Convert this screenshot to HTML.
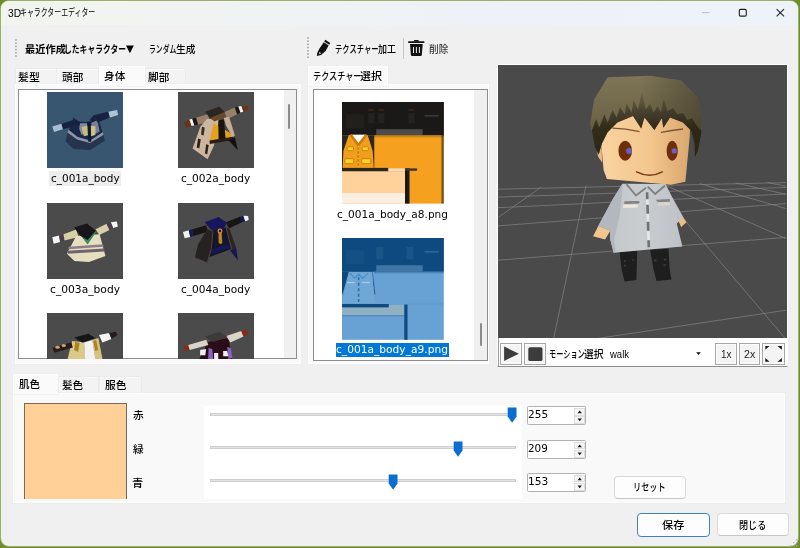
<!DOCTYPE html>
<html lang="ja"><head><meta charset="utf-8"><title>3Dキャラクターエディター</title>
<style>html,body{margin:0;padding:0}
body{width:800px;height:548px;overflow:hidden;background:#6f8c2e;position:relative;font-family:"Liberation Sans","Noto Sans CJK JP",sans-serif}
div,span,svg{position:absolute;box-sizing:border-box}
.t{font-weight:500;white-space:nowrap;line-height:16px;height:16px;transform-origin:0 50%;display:block}
.j{font-family:"Liberation Sans","Noto Sans CJK JP",sans-serif}
.v{font-family:"DejaVu Sans","Liberation Sans",sans-serif}
.btn{background:#fdfdfd;border:1px solid #d9d9d9;border-bottom-color:#c6c6c6;border-radius:4px}
.sbtn{background:#f4f4f4;border:1px solid #a6a6a6;box-shadow:inset 0 0 0 1px #fbfbfb}
.spin{background:#fff;border:1px solid #b2b2b2;border-radius:1.5px}
.tab{background:#f3f3f3;border:1px solid #ebebeb;border-bottom:none;box-shadow:inset 1px 1px 0 #f8f8f8}
.tabsel{background:#fafafa;border:1px solid #fdfdfd;border-bottom:none;box-shadow:0 0 0 .5px #ebebeb}
</style></head>
<body>
<svg width="0" height="0" style="left:0;top:0"><defs><filter id="sb" x="-10%" y="-10%" width="120%" height="120%"><feGaussianBlur stdDeviation="0.45"/></filter></defs></svg>
<div id="window" style="left:1px;top:1px;width:797px;height:545px;border-radius:8px;background:#f0f0f0;overflow:hidden;box-shadow:0 0 0 1px rgba(190,205,150,.55)"><div id="titlebar" style="left:0;top:0;width:797px;height:24px;background:linear-gradient(90deg,#f2f5ee 0%,#f0f3f3 30%,#eef2f8 60%,#eef2f9 100%)"></div></div>
<span class="t j" style="left:7.51px;top:4.60px;font-size:10.5px;font-weight:400;transform:scaleX(0.9760);">3D</span>
<span class="t j" style="left:19.91px;top:4.60px;font-size:10px;font-weight:400;transform:scaleX(0.6907);">キャラクターエディター</span>
<svg style="left:690px;top:0px" width="110" height="26" viewBox="0 0 110 26" ><path d="M12.1 12.65H19.5" stroke="#bcc0c4" stroke-width="1" fill="none"/><rect x="49.3" y="9.4" width="7" height="6.7" rx="1.4" fill="none" stroke="#1e1e1e" stroke-width="1.1"/><path d="M86.6 9.1L94 16.4M94 9.1L86.6 16.4" stroke="#1e1e1e" stroke-width="1.05" fill="none"/></svg>
<svg style="left:14.9px;top:39.0px" width="2" height="21" viewBox="0 0 2 21" ><rect x="0.2" y="0.20" width="1.5" height="1.5" fill="#9c9c9c"/><rect x="0.2" y="3.42" width="1.5" height="1.5" fill="#9c9c9c"/><rect x="0.2" y="6.64" width="1.5" height="1.5" fill="#9c9c9c"/><rect x="0.2" y="9.86" width="1.5" height="1.5" fill="#9c9c9c"/><rect x="0.2" y="13.08" width="1.5" height="1.5" fill="#9c9c9c"/><rect x="0.2" y="16.30" width="1.5" height="1.5" fill="#9c9c9c"/></svg>
<span class="t j" style="left:25.01px;top:40.80px;font-size:10.5px;font-weight:700;transform:scaleX(0.9758);">最近作成</span>
<span class="t j" style="left:64.08px;top:40.80px;font-size:10.5px;font-weight:700;transform:scaleX(0.7422);">したキャラクター</span>
<span class="t v" style="left:126.25px;top:40.60px;font-size:10px;font-weight:400;transform:scaleX(1.0200);">▼</span>
<span class="t j" style="left:149.03px;top:40.80px;font-size:10.5px;transform:scaleX(0.6500);">ランダム</span>
<span class="t j" style="left:175.94px;top:40.80px;font-size:10.5px;transform:scaleX(0.9284);">生成</span>
<svg style="left:307.4px;top:37.4px" width="2" height="25" viewBox="0 0 2 25" ><rect x="0.2" y="0.20" width="1.5" height="1.5" fill="#9c9c9c"/><rect x="0.2" y="3.42" width="1.5" height="1.5" fill="#9c9c9c"/><rect x="0.2" y="6.64" width="1.5" height="1.5" fill="#9c9c9c"/><rect x="0.2" y="9.86" width="1.5" height="1.5" fill="#9c9c9c"/><rect x="0.2" y="13.08" width="1.5" height="1.5" fill="#9c9c9c"/><rect x="0.2" y="16.30" width="1.5" height="1.5" fill="#9c9c9c"/><rect x="0.2" y="19.52" width="1.5" height="1.5" fill="#9c9c9c"/></svg>
<svg style="left:315px;top:38px" width="18" height="20" viewBox="0 0 18 20" ><g fill="#111"><path d="M10.3 1.7 L15.2 4.9 L14.1 6.7 L9.2 3.6 Z"/><path d="M8.8 4.3 L13.6 7.4 L10.6 12.9 L6.0 16.9 L1.9 17.9 L2.3 14.8 L4.3 10.7 Z"/></g><path d="M4.3 14.0L6.3 15.2L4.2 16.2Z" fill="#eee"/></svg>
<span class="t j" style="left:334.90px;top:40.60px;font-size:10.5px;transform:scaleX(0.6975);">テクスチャー</span>
<span class="t j" style="left:377.59px;top:40.60px;font-size:10.5px;transform:scaleX(0.8593);">加工</span>
<div style="left:402.8px;top:38px;width:1px;height:21px;background:#c6c6c6"></div>
<svg style="left:407px;top:38px" width="20" height="20" viewBox="0 0 20 20" ><g fill="#111"><path d="M6.8 3.6V2.9Q6.8 1.9 7.9 1.9H10.8Q11.9 1.9 11.9 2.9V3.6Z"/><rect x="1.0" y="3.3" width="16.5" height="1.7" rx=".8"/><path d="M3.0 6.0 H15.7 L14.8 16.9 Q14.7 18.0 13.6 18.0 H5.1 Q4.0 18.0 3.9 16.9 Z"/></g><g stroke="#f0f0f0" stroke-width="1" fill="none" stroke-linecap="round"><path d="M6.5 9.4V14.6M9.4 9.4V14.6M12.4 9.4V14.6"/></g></svg>
<span class="t j" style="left:428.54px;top:40.60px;font-size:10.5px;color:#3c3c3c;transform:scaleX(0.9185);">削除</span>
<div class="tab" style="left:15.00px;top:68.00px;width:41.60px;height:17.00px;"></div>
<div class="tab" style="left:56.20px;top:68.00px;width:43.20px;height:17.00px;"></div>
<div class="tab" style="left:144.50px;top:68.00px;width:41.40px;height:17.00px;"></div>
<div style="left:15.20px;top:84.40px;width:285.40px;height:279.80px;background:#f9f9f9;border:1px solid #fdfdfd;box-shadow:0 0 0 .5px #ebebeb"></div>
<div class="tabsel" style="left:99.00px;top:65.60px;width:46.00px;height:20.00px;"></div>
<span class="t j" style="left:18.23px;top:69.20px;font-size:10.5px;transform:scaleX(1.0375);">髪型</span>
<span class="t j" style="left:61.99px;top:69.20px;font-size:10.5px;transform:scaleX(1.0123);">頭部</span>
<span class="t j" style="left:104.49px;top:67.60px;font-size:10.5px;transform:scaleX(1.0123);">身体</span>
<span class="t j" style="left:147.75px;top:69.20px;font-size:10.5px;transform:scaleX(1.0122);">脚部</span>
<div style="left:17.80px;top:88.50px;width:279.20px;height:270.90px;background:#fff;border:1px solid #8b8d92;overflow:hidden"><div style="left:265.40px;top:0.00px;width:12.80px;height:269.00px;background:#f0f0f0"></div><div style="left:269.30px;top:14.30px;width:2.20px;height:25.60px;background:#8b8b8b;border-radius:1px"></div></div>
<svg style="left:47px;top:92px" width="76.3" height="76.3" viewBox="0 0 76.3 76.3"><rect width="76.3" height="76.3" fill="#385670"/><g filter="url(#sb)"><polygon points="20.8,40.4 30.4,46.8 43.1,50.4 56.4,42.2 57.9,48.8 43.1,57.9 26.7,57.0 18.5,49.5" fill="#25364e" /><polygon points="21.7,37.6 30.4,44.5 43.1,48.1 55.5,39.9 56.6,42.7 43.1,51.1 30.0,47.5 20.5,40.6" fill="#8d93a9" /><polygon points="25.8,29.0 41.3,30.3 51.4,26.2 55.5,40.2 43.1,48.4 30.4,44.8 21.7,37.8" fill="#1a2849" /><polygon points="33.1,31.2 40.4,31.2 39.5,40.4 34.5,43.1 32.2,36.7" fill="#7f88a0" /><polygon points="44.1,30.8 50.4,28.1 52.7,39.5 46.8,43.1" fill="#767f98" /><polygon points="34.5,34.9 41.3,33.6 42.2,43.1 36.9,44.2" fill="#c9bb80" /><polygon points="43.1,33.3 48.6,34.5 48.3,43.1 44.1,44.2" fill="#cfc082" /><polygon points="40.2,29.4 43.7,29.4 44.2,49.7 41.3,49.7" fill="#111a34" /><polygon points="25.8,25.6 33.3,30.5 30.4,34.2 26.9,31.2" fill="#14203c" /><polygon points="47.0,22.9 48.8,28.7 44.1,30.5 43.1,27.6" fill="#14203c" /><polygon points="14.4,31.7 27.8,27.6 30.4,33.6 15.8,37.3" fill="#16233f" /><polygon points="46.6,23.2 61.4,19.8 62.9,25.4 50.4,30.5" fill="#16233f" /><polygon points="5.3,34.5 14.4,31.7 15.8,37.3 7.1,40.0" fill="#a6bed3" /><polygon points="61.4,19.8 70.1,18.0 71.1,23.0 62.9,25.4" fill="#aec4d6" /></g></svg>
<svg style="left:178px;top:92px" width="76.3" height="76.3" viewBox="0 0 76.3 76.3"><rect width="76.3" height="76.3" fill="#4b4b4b"/><g filter="url(#sb)"><polygon points="5.8,30.1 11.4,27.4 13.6,34.0 8.5,35.9" fill="#6a3518" /><polygon points="11.4,27.4 14.3,26.7 16.4,33.3 13.6,34.0" fill="#f4f4f4" /><polygon points="14.3,26.7 18.2,25.7 20.1,32.6 16.4,33.3" fill="#1c1614" /><polygon points="18.2,25.7 29.6,22.3 32.1,29.6 20.1,32.6" fill="#98806a" /><polygon points="46.4,20.1 56.9,15.5 59.1,22.3 49.3,27.2" fill="#98806a" /><polygon points="56.9,15.5 60.3,14.6 62.5,20.4 59.1,22.3" fill="#1c1614" /><polygon points="60.3,14.6 63.5,13.9 65.4,19.7 62.5,20.4" fill="#f4f4f4" /><polygon points="63.5,13.9 69.8,13.6 70.8,18.0 65.4,19.7" fill="#6a3518" /><polygon points="29.2,26.7 41.3,27.4 35.9,53.7 29.6,67.2 14.6,56.6 22.3,34.7" fill="#cdb69f" /><polygon points="35.5,31.1 53.7,42.0 54.9,45.3 31.5,49.6" fill="#e6a21f" /><polygon points="40.3,28.2 46.0,27.4 47.6,46.7 40.6,47.6" fill="#19130f" /><polygon points="45.7,25.7 51.1,25.0 56.9,43.5 54.6,45.3 47.9,33.3" fill="#c4ad96" /><polygon points="31.5,48.6 54.9,44.7 55.5,47.9 31.8,52.0" fill="#2a1d14" /><polygon points="50.5,48.2 56.9,45.3 59.9,58.4" fill="#15110e" /><polygon points="20.1,46.4 22.8,47.2 21.3,56.6 18.7,55.5" fill="#2a2018" /><polygon points="28.2,52.3 30.7,53.0 29.2,62.5 26.9,61.3" fill="#2a2018" /><polygon points="23.8,34.7 26.7,35.5 25.7,43.5 23.1,42.8" fill="#3b2e1e" /><polygon points="27.2,19.7 41.3,14.7 46.7,20.1 32.1,26.3" fill="#2b2521" /><polygon points="32.1,26.3 46.7,20.1 46.4,25.3 36.5,29.6" fill="#6b4a2c" /></g></svg>
<svg style="left:47px;top:202.5px" width="76.3" height="76.3" viewBox="0 0 76.3 76.3"><rect width="76.3" height="76.3" fill="#4b4b4b"/><g filter="url(#sb)"><polygon points="5.3,34.2 12.1,32.4 13.1,39.0 6.7,40.7" fill="#f6f6f6" /><polygon points="12.1,32.4 16.5,31.2 17.5,37.5 13.1,39.0" fill="#4b3c4a" /><polygon points="16.5,31.2 29.2,26.6 31.5,33.9 17.5,37.5" fill="#d6cfa8" /><polygon points="48.6,26.3 59.6,20.7 62.5,26.9 52.3,32.1" fill="#d6cfa8" /><polygon points="59.6,20.7 63.9,19.3 66.3,25.1 62.5,26.9" fill="#4b3c4a" /><polygon points="63.9,19.3 69.8,18.5 70.9,23.6 66.3,25.1" fill="#f6f6f6" /><polygon points="29.2,33.1 52.6,31.2 58.4,53.1 42.0,59.0 27.4,58.1 19.9,50.7" fill="#e6dfbf" /><polygon points="21.6,43.8 55.9,41.2 56.6,43.8 21.3,46.3" fill="#8b7f88" /><polygon points="20.4,47.7 56.9,45.5 57.8,48.5 20.9,50.7" fill="#6f6470" /><polygon points="33.3,32.1 40.6,41.5 49.6,28.5 47.2,27.0 40.6,36.5" fill="#3a8a58" /><polygon points="27.2,24.4 39.9,20.4 48.9,27.7 40.6,37.1 33.0,32.4" fill="#17131a" /></g></svg>
<svg style="left:178px;top:202.5px" width="76.3" height="76.3" viewBox="0 0 76.3 76.3"><rect width="76.3" height="76.3" fill="#4b4b4b"/><g filter="url(#sb)"><polygon points="5.0,29.1 10.7,27.3 12.3,33.9 6.7,35.3" fill="#f0f0f6" /><polygon points="10.7,27.3 13.9,26.4 15.3,33.1 12.3,33.9" fill="#17175a" /><polygon points="13.9,26.4 28.2,22.2 29.9,28.8 15.3,33.1" fill="#191513" /><polygon points="47.9,19.3 62.5,13.4 64.2,19.3 50.8,25.4" fill="#191513" /><polygon points="62.5,13.4 65.4,12.7 67.2,18.2 64.2,19.3" fill="#17175a" /><polygon points="65.4,12.7 70.1,13.0 70.7,17.1 67.2,18.2" fill="#f0f0f6" /><polygon points="29.2,26.3 35.5,28.8 32.1,52.8 29.6,59.4 16.9,54.6 20.1,41.2" fill="#272321" /><polygon points="34.7,26.6 48.2,24.8 54.0,45.8 31.5,54.0" fill="#13132c" /><polygon points="47.9,24.1 51.8,26.6 58.4,45.5 53.7,47.3" fill="#2b2624" /><polygon points="52.0,47.3 58.4,45.5 59.9,57.5" fill="#191950" /><polygon points="32.7,47.0 42.0,43.8 52.8,41.9 53.7,45.0 42.0,47.7 32.1,50.8" fill="#17175c" /><polyline points="35.0,28.3 33.3,45.5 29.5,59.0" fill="none" stroke="#5a4436" stroke-width="1"/><polyline points="48.2,25.1 51.1,36.8 54.0,46.4" fill="none" stroke="#5a4436" stroke-width="1"/><polygon points="40.4,26.6 43.4,26.3 44.4,39.7 42.9,41.2 40.6,40.0" fill="#b98420" /><polygon points="26.7,19.3 40.6,13.9 48.9,19.7 46.4,24.7 33.3,26.9" fill="#18185e" /><circle cx="42.0" cy="28.0" r="2.5" fill="#d98a28"/><circle cx="42.0" cy="28.0" r="1.2" fill="#18185e"/></g></svg>
<svg style="left:47px;top:313px" width="76.3" height="46" viewBox="0 0 76.3 46"><rect width="76.3" height="46" fill="#4b4b4b"/><g filter="url(#sb)"><polygon points="25.1,27.9 37.3,29.4 38.4,47.0 20.3,47.0" fill="#d9c98a" /><polygon points="45.2,26.9 51.4,24.9 55.7,47.0 48.2,47.0" fill="#d4c27e" /><polygon points="28.1,28.9 32.6,29.9 31.1,39.0 27.1,36.9" fill="#a8851f" /><polygon points="46.2,27.9 49.2,27.1 51.2,36.9 48.2,38.0" fill="#a8851f" /><polygon points="37.1,29.4 45.4,26.9 48.4,47.0 38.2,47.0" fill="#f2f2f2" /><polygon points="5.5,34.9 24.3,29.2 25.8,34.4 7.5,39.7" fill="#2a1a18" /><ellipse cx="10.6" cy="34.2" rx="2.2" ry="1.5" fill="#c9a382"/><ellipse cx="16.8" cy="32.4" rx="2.2" ry="1.5" fill="#c9a382"/><polygon points="27.1,24.4 41.4,20.7 48.4,24.9 35.3,29.6" fill="#141414" /><polygon points="52.0,22.1 62.2,19.9 64.5,25.9 55.4,29.6" fill="#f6f6f6" /><polygon points="62.2,19.9 68.5,18.7 70.5,21.9 64.5,25.9" fill="#2a1a1c" /></g></svg>
<svg style="left:178px;top:313px" width="76.3" height="46" viewBox="0 0 76.3 46"><rect width="76.3" height="46" fill="#4b4b4b"/><g filter="url(#sb)"><polygon points="29.9,28.9 50.4,24.7 54.4,47.0 20.9,47.0" fill="#2b1115" /><polygon points="30.6,34.9 34.3,35.9 35.3,47.0 30.1,47.0" fill="#8b62c2" /><polygon points="49.2,33.9 52.8,34.9 54.4,45.0 50.4,46.0" fill="#8b62c2" /><polygon points="22.1,36.9 28.1,35.9 27.3,42.2 22.1,42.2" fill="#efefef" /><polygon points="36.1,40.0 40.2,40.0 40.2,47.0 36.1,47.0" fill="#efefef" /><polygon points="45.2,38.0 49.2,38.0 50.4,43.2 45.2,43.2" fill="#efefef" /><polygon points="5.5,33.4 10.2,31.9 11.7,36.9 7.5,38.2" fill="#8a2a18" /><polygon points="10.2,31.9 28.3,26.7 30.3,31.9 11.7,36.9" fill="#d9d5c9" /><polygon points="48.2,22.9 63.3,17.9 65.5,23.4 52.4,29.6" fill="#d9d5c9" /><polygon points="63.3,17.9 68.5,16.7 70.5,20.9 65.5,23.4" fill="#8a2a18" /><polygon points="26.9,23.4 41.4,18.7 49.4,23.9 35.3,29.1" fill="#3a3a3a" /></g></svg>
<div style="left:49.00px;top:171.00px;width:71.60px;height:14.60px;background:#ededed"></div>
<span class="t v" style="left:50.68px;top:171.00px;font-size:10px;transform:scaleX(1.0481);">c_001a_body</span>
<span class="t v" style="left:181.17px;top:171.00px;font-size:10px;transform:scaleX(1.0589);">c_002a_body</span>
<span class="t v" style="left:49.97px;top:281.60px;font-size:10px;transform:scaleX(1.0698);">c_003a_body</span>
<span class="t v" style="left:181.17px;top:281.60px;font-size:10px;transform:scaleX(1.0589);">c_004a_body</span>
<div style="left:307.80px;top:84.40px;width:181.40px;height:279.80px;background:#f9f9f9;border:1px solid #fdfdfd;box-shadow:0 0 0 .5px #ebebeb"></div>
<div class="tabsel" style="left:308.00px;top:65.60px;width:79.50px;height:20.00px;"></div>
<span class="t j" style="left:312.72px;top:67.60px;font-size:10.5px;transform:scaleX(0.7752);">テクスチャー</span>
<span class="t j" style="left:360.34px;top:67.60px;font-size:10.5px;transform:scaleX(1.0439);">選択</span>
<div style="left:313.30px;top:88.50px;width:174.50px;height:272.40px;background:#fff;border:1px solid #8b8d92;overflow:hidden"><div style="left:159.50px;top:0.00px;width:13.00px;height:271.00px;background:#f0f0f0"></div><div style="left:165.60px;top:233.20px;width:2.20px;height:23.50px;background:#8b8b8b;border-radius:1px"></div></div>
<svg style="left:341.8px;top:102px" width="101.8" height="101.6" viewBox="0 0 101 101" preserveAspectRatio="none"><rect width="101" height="101" fill="#f5a11f"/><rect width="101" height="33.5" fill="#1b1917"/><rect x="26" y="7" width="6" height="2" fill="#5a2f18" opacity=".45"/><rect x="26" y="11" width="6" height="10" fill="#26221f"/><rect x="36" y="7" width="6" height="2" fill="#5a2f18" opacity=".45"/><rect x="36" y="11" width="6" height="10" fill="#26221f"/><rect x="66" y="7" width="6" height="2" fill="#5a2f18" opacity=".45"/><rect x="66" y="11" width="6" height="10" fill="#26221f"/><rect x="4" y="12" width="18" height="14" fill="#22201d"/><rect x="82" y="13" width="14" height="1.5" fill="#4a4a4a" opacity=".7"/><rect x="34" y="27" width="46" height="6.5" fill="#4b4b4b"/><rect x="32" y="33" width="69" height="2.2" fill="#c98310"/><rect x="98.6" y="0" width="2.4" height="101" fill="#1b1917" opacity=".55"/><rect x="0" y="33.5" width="32" height="33" fill="#2a2622"/><path d="M0.6 65.6L1.4 48.4L6.6 33.4Q7 32.6 8 32.6H24.2Q25.2 32.6 25.6 33.4L30.4 48.4L31.6 65.6Z" fill="#f39d1d"/><path d="M8.6 32.6L16.2 43L24 32.6" fill="none" stroke="#c77c10" stroke-width="2.6"/><path d="M10.2 32.6L16.3 40.6L22.6 32.6Z" fill="#fff"/><path d="M16.1 43V65" stroke="#c77c10" stroke-width="1.6" fill="none"/><path d="M16.1 43.5V65" stroke="#ffd31e" stroke-width="1.1" stroke-dasharray="1.4 2.6" fill="none"/><rect x="5.2" y="44.6" width="6.2" height="3.8" rx="1" fill="#ffd31e" stroke="#c27a10" stroke-width=".9"/><rect x="20" y="44.6" width="6.2" height="3.8" rx="1" fill="#ffd31e" stroke="#c27a10" stroke-width=".9"/><rect x="2.8" y="56.4" width="8.9" height="4.9" rx="1" fill="#ffd31e" stroke="#c27a10" stroke-width=".9"/><rect x="19.6" y="56.4" width="8.9" height="4.9" rx="1" fill="#ffd31e" stroke="#c27a10" stroke-width=".9"/><rect x="0" y="65.5" width="46" height="3.6" fill="#2a2622"/><rect x="46" y="66" width="17" height="3" fill="#f7dcc0"/><rect x="0" y="69" width="62.5" height="21.5" fill="#ffd29c"/><rect x="0" y="90.5" width="62.5" height="10.5" fill="#fdeee4"/><rect x="62.5" y="66" width="4.5" height="35" fill="#1b1917"/><rect x="62.5" y="66" width="12" height="2.4" fill="#3a3532"/></svg>
<svg style="left:341.8px;top:238.2px" width="101.8" height="101.8" viewBox="0 0 101 101" preserveAspectRatio="none"><rect width="101" height="101" fill="#68a1d3"/><rect width="101" height="33.5" fill="#0e4a7f"/><rect x="34" y="9" width="7" height="12" fill="#1b5688" opacity=".9"/><rect x="64" y="9" width="7" height="12" fill="#1b5688" opacity=".9"/><rect x="4" y="12" width="18" height="14" fill="#145083"/><rect x="82" y="13" width="14" height="1.5" fill="#3a6f9e" opacity=".8"/><rect x="34" y="27" width="46" height="6.5" fill="#3f76a5"/><rect x="32" y="33.5" width="69" height="1.6" fill="#4a86ba"/><path d="M0 33.5H6.8L0.5 56H0Z" fill="#0e4a7f"/><path d="M30 34L32.6 56" stroke="#2a679d" stroke-width="1.2" fill="none"/><path d="M0.5 64.5L6.8 34H30L32.2 64.5Z" fill="#6fa7d7"/><path d="M8 35L12.5 40L16.5 36L20.5 40L26 35" fill="none" stroke="#4a86ba" stroke-width="1"/><path d="M16.5 39V64" stroke="#2d6aa0" stroke-width="1.5" stroke-dasharray="3 2.4" fill="none"/><rect x="5" y="43.5" width="7.5" height="1.3" fill="#a9cbe6"/><rect x="20" y="43.5" width="7.5" height="1.3" fill="#a9cbe6"/><rect x="65" y="65" width="36" height="0.9" fill="#5f97c9"/><rect x="0" y="65.5" width="46.5" height="3.6" fill="#0e4a7f"/><rect x="0" y="69" width="61.5" height="7.5" fill="#8fb1c2"/><rect x="46.5" y="66.5" width="15" height="4" fill="#8fb1c2"/><rect x="0" y="76.5" width="62" height="1.2" fill="#4d88bd"/><rect x="61.8" y="66" width="3.2" height="35" fill="#0e4a7f"/></svg>
<span class="t v" style="left:336.87px;top:206.80px;font-size:10px;transform:scaleX(1.0554);">c_001a_body_a8.png</span>
<div style="left:335.50px;top:342.80px;width:113.30px;height:14.30px;background:#0078d7"></div>
<span class="t v" style="left:336.47px;top:342.10px;font-size:10px;color:#fff;transform:scaleX(1.0641);">c_001a_body_a9.png</span>
<div style="left:497.40px;top:64.00px;width:290.40px;height:302.80px;background:#fff;border:1px solid #fff;border-bottom:1px solid #8c8c8c"></div>
<div style="left:498.20px;top:338.40px;width:1.00px;height:28.00px;background:#9a9a9a"></div>
<svg style="left:498.4px;top:65px" width="288.3" height="273.4" viewBox="498.4 65 288.3 273.4"><defs><linearGradient id="face" x1="0" y1="0" x2="1" y2="0"><stop offset="0" stop-color="#f9d3a0"/><stop offset=".55" stop-color="#f3c68e"/><stop offset="1" stop-color="#d9a66f"/></linearGradient><linearGradient id="hair" x1="0" y1="0" x2="0" y2="1"><stop offset="0" stop-color="#7f7658"/><stop offset=".5" stop-color="#6f6649"/><stop offset="1" stop-color="#4a432e"/></linearGradient><linearGradient id="shirt" x1="0" y1="0" x2="1" y2="0"><stop offset="0" stop-color="#c1c6ca"/><stop offset=".5" stop-color="#c9cdd0"/><stop offset="1" stop-color="#bfc3c7"/></linearGradient><linearGradient id="band" gradientUnits="userSpaceOnUse" x1="0" y1="92" x2="0" y2="128"><stop offset="0" stop-color="#3a3424" stop-opacity=".2"/><stop offset=".6" stop-color="#2c2719" stop-opacity=".62"/><stop offset="1" stop-color="#241f14" stop-opacity=".8"/></linearGradient><linearGradient id="hairr" gradientUnits="userSpaceOnUse" x1="640" y1="0" x2="704" y2="0"><stop offset="0" stop-color="#2a2416" stop-opacity="0"/><stop offset="1" stop-color="#2a2416" stop-opacity=".45"/></linearGradient><filter id="hb" x="-10%" y="-10%" width="120%" height="120%"><feGaussianBlur stdDeviation="0.7"/></filter></defs><rect x="498" y="64" width="290" height="276" fill="#4a4a4a"/><path d="M498.4 189.2L786.6 182.6M498.4 197.1L786.6 187.4M498.4 207.7L786.6 194.0M498.4 225.9L786.6 203.6M498.4 260.2L786.6 237.4M597.0 338.6L786.6 310.2M541.5 187.2L499.0 217.2M586.4 185.6L554.0 338.6M655.0 184.7L786.6 339.5M664.0 184.5L786.6 238.6M700.0 183.6L786.6 208.6M736.0 183.0L786.6 194.4M768.0 182.6L786.6 186.2" stroke="#858585" stroke-width="0.8" fill="none" opacity=".85"/><polygon points="620.0,251.5 637.6,251.0 636.8,280.0 625.0,281.6 622.0,270.0" fill="#1e1e1e" /><polygon points="650.5,249.6 669.0,249.0 670.0,269.0 671.8,279.5 657.0,281.0 654.0,270.0" fill="#1e1e1e" /><g fill="#3a3a3a"><circle cx="625.2" cy="260.8" r="1.1"/><circle cx="633.6" cy="260" r="1.1"/><circle cx="625.4" cy="265.6" r="1.1"/><circle cx="655.8" cy="260.4" r="1.2"/><circle cx="665.4" cy="259.6" r="1.2"/><circle cx="665" cy="265.2" r="1.1"/></g><polygon points="598.8,225.7 610.7,230.8 605.5,239.4 593.5,236.3" fill="#f0c58f" /><polygon points="678.4,220.3 683.4,216.9 686.9,222.3 681.6,227.0" fill="#eabc86" /><polygon points="622.8,183.8 665.9,184.1 672.0,196.0 683.7,217.2 678.7,222.0 677.2,223.8 682.8,246.5 614.1,252.8 610.4,238.4 610.7,230.8 598.8,225.8 613.3,199.0" fill="url(#shirt)" /><polygon points="622.8,183.8 613.3,199.0 598.8,225.8 610.7,230.8 610.4,238.4 614.1,252.8 615.7,252.5 614.8,238.4 619.9,216.5 622.4,196.0" fill="#b2b8be" /><polygon points="624.7,201.3 638.9,200.9 640.3,202.3 639.0,203.6 624.7,203.9" fill="#808184" /><polygon points="623.6,204.8 638.1,204.4 638.1,207.4 623.6,207.9" fill="#efe6dc" /><polygon points="656.4,199.7 669.9,199.1 670.5,201.7 658.0,202.0" fill="#808184" /><polygon points="658.6,202.8 670.2,202.3 670.5,205.2 658.6,205.7" fill="#ded6cc" /><polyline points="626.8,184.1 636.4,195.5 646.6,187.6" fill="none" stroke="#7d8084" stroke-width="1.8" stroke-linejoin="miter"/><polyline points="648.1,186.7 655.6,194.0 665.4,185.5" fill="none" stroke="#7d8084" stroke-width="1.8" stroke-linejoin="miter"/><path d="M647.5 192.3L649.2 247.4" stroke="#e6e6e6" stroke-width="2.6" fill="none"/><path d="M647.5 192.3L649.2 247.4" stroke="#727275" stroke-width="2.7" stroke-dasharray="7 5.5 9 8 9 9.5 8 0" fill="none"/><polygon points="601.2,103.5 691.4,103.5 690.1,136.7 685.8,181.7 671.2,184.7 607.3,179.1 604.0,169.9 601.7,144.3" fill="url(#face)" /><polygon points="595.6,144.3 601.7,142.3 602.7,162.7 598.6,157.1" fill="#e8bb84" /><ellipse cx="625.6" cy="150.7" rx="6.8" ry="10" fill="#6e2f0b"/><circle cx="629.4" cy="150.9" r="2.9" fill="#6b5fc4"/><ellipse cx="672.6" cy="150.7" rx="5.6" ry="10" fill="#6e2f0b"/><circle cx="674.6" cy="150.9" r="2.7" fill="#6b5fc4"/><path d="M612.9 128.2Q626 128.4 640 131.6" stroke="#7a5530" stroke-width="1.3" fill="none"/><path d="M661.3 132.4Q672 130.2 683.4 129" stroke="#7a5530" stroke-width="1.3" fill="none"/><path d="M637 171.8Q650 178.6 662.6 171.8" stroke="#7a3a14" stroke-width="1.5" fill="none" stroke-linecap="round"/><polygon points="608.0,77.3 650.7,75.7 681.8,80.6 698.3,97.8 702.5,119.2 701.2,135.6 698.3,150.4 695.3,156.9 695.0,143.8 691.7,130.7 683.5,122.5 670.4,117.5 663.8,127.7 662.2,118.3 654.8,130.0 644.9,117.5 641.6,128.4 633.4,115.9 617.8,122.5 608.0,132.3 602.2,143.8 599.1,154.5 595.2,147.9 590.6,124.1 594.5,99.5" fill="url(#hair)" /><polygon points="608.0,77.3 650.7,75.7 681.8,80.6 698.3,97.8 702.5,119.2 701.2,135.6 698.3,150.4 695.3,156.9 695.0,143.8 691.7,130.7 683.5,122.5 670.4,117.5 663.8,127.7 662.2,118.3 654.8,130.0 644.9,117.5 641.6,128.4 633.4,115.9 617.8,122.5 608.0,132.3 602.2,143.8 599.1,154.5 595.2,147.9 590.6,124.1 594.5,99.5" fill="url(#hairr)" /><polygon points="599.1,154.5 595.2,147.1 592.2,130.7 596.5,119.2 599.8,127.4 604.7,114.2 608.0,122.5 612.9,110.1 617.0,117.5 620.3,106.9 625.2,114.2 626.9,103.6 631.8,112.6 634.2,100.3 638.3,109.3 642.5,92.6 646.1,109.3 650.7,104.1 653.9,112.6 658.0,106.0 661.3,112.6 664.1,99.1 667.9,111.0 673.6,108.0 677.7,114.2 683.5,112.9 687.6,120.0 692.5,118.3 698.3,127.4 701.9,130.7 701.2,135.6 698.3,150.4 695.3,156.9 695.0,143.8 691.7,130.7 683.5,122.5 670.4,117.5 663.8,127.7 662.2,118.3 654.8,130.0 644.9,117.5 641.6,128.4 633.4,115.9 617.8,122.5 608.0,132.3 602.2,143.8" fill="url(#band)" filter="url(#hb)"/></svg>
<div class="sbtn" style="left:500.10px;top:342.50px;width:22.30px;height:22.40px;"></div>
<div class="sbtn" style="left:524.20px;top:342.50px;width:22.30px;height:22.40px;"></div>
<svg style="left:500px;top:342px" width="48" height="24" viewBox="0 0 48 24" ><path d="M4.1 4.5V18.9L18.9 11.7Z" fill="#3c3c3c"/><rect x="28.3" y="5.3" width="14.2" height="13.8" rx="1.6" fill="#3c3c3c"/></svg>
<span class="t j" style="left:548.74px;top:346.00px;font-size:10.5px;transform:scaleX(0.6846);">モーション</span>
<span class="t j" style="left:583.77px;top:346.00px;font-size:10.5px;transform:scaleX(0.9268);">選択</span>
<div style="left:606.00px;top:342.60px;width:101.00px;height:21.80px;background:#fff"></div>
<span class="t j" style="left:610.00px;top:345.60px;font-size:10.5px;transform:scaleX(0.9048);">walk</span>
<svg style="left:694px;top:350px" width="10" height="8" viewBox="0 0 10 8" ><path d="M2.2 2.2H6.8L4.5 5.0Z" fill="#111"/></svg>
<div class="sbtn" style="left:715.20px;top:342.70px;width:21.60px;height:22.00px;"></div>
<div class="sbtn" style="left:738.60px;top:342.70px;width:21.70px;height:22.00px;"></div>
<div class="sbtn" style="left:762.40px;top:342.70px;width:22.30px;height:22.00px;"></div>
<span class="t j" style="left:720.50px;top:345.80px;font-size:10.5px;color:#222;transform:scaleX(0.9366);">1x</span>
<span class="t j" style="left:743.50px;top:345.80px;font-size:10.5px;color:#222;transform:scaleX(1.0095);">2x</span>
<svg style="left:762px;top:343px" width="23" height="22" viewBox="0 0 23 22" ><g fill="#1a1a1a"><path d="M3.3 3.1H7.5L3.3 6.7Z"/><path d="M19.9 3.1V6.7L15.5 3.1Z"/><path d="M3.3 18.8V15.1L7.5 18.8Z"/><path d="M19.9 18.8H15.5L19.9 15.1Z"/></g></svg>
<div class="tab" style="left:57.60px;top:375.80px;width:41.60px;height:17.60px;"></div>
<div class="tab" style="left:98.80px;top:375.80px;width:42.80px;height:17.60px;"></div>
<div style="left:12.80px;top:392.80px;width:772.60px;height:110.00px;background:#f9f9f9;border:1px solid #fdfdfd;box-shadow:0 0 0 .5px #ebebeb"></div>
<div class="tabsel" style="left:13.00px;top:374.40px;width:45.20px;height:19.40px;"></div>
<span class="t j" style="left:19.05px;top:375.50px;font-size:10.5px;transform:scaleX(0.9975);">肌色</span>
<span class="t j" style="left:61.79px;top:377.20px;font-size:10.5px;transform:scaleX(1.0100);">髪色</span>
<span class="t j" style="left:104.74px;top:377.20px;font-size:10.5px;transform:scaleX(1.0222);">服色</span>
<div style="left:24.20px;top:403.00px;width:102.40px;height:96.00px;background:#ffd199;border:1px solid #7a6a55;border-bottom:none"></div>
<span class="t j" style="left:132.75px;top:406.50px;font-size:10.5px;transform:scaleX(1.0200);">赤</span>
<span class="t j" style="left:132.75px;top:441.00px;font-size:10.5px;transform:scaleX(1.0200);">緑</span>
<span class="t j" style="left:132.46px;top:474.70px;font-size:10.5px;transform:scaleX(1.0737);">青</span>
<div style="left:203.75px;top:406.00px;width:318.70px;height:92.60px;background:#fff"></div>
<div style="left:209.80px;top:412.90px;width:305.80px;height:2.90px;background:#e2e4e4;border:1px solid #cfcfcf"></div>
<svg style="left:506.6px;top:406.3px" width="10" height="18" viewBox="0 0 10 18" ><path d="M0.7 1.6H9.5V10.6L5.1 16.7L0.7 10.6Z" fill="#0b6dd0"/></svg>
<div style="left:209.80px;top:446.40px;width:305.80px;height:2.90px;background:#e2e4e4;border:1px solid #cfcfcf"></div>
<svg style="left:453.4px;top:439.8px" width="10" height="18" viewBox="0 0 10 18" ><path d="M0.7 1.6H9.5V10.6L5.1 16.7L0.7 10.6Z" fill="#0b6dd0"/></svg>
<div style="left:209.80px;top:479.40px;width:305.80px;height:2.90px;background:#e2e4e4;border:1px solid #cfcfcf"></div>
<svg style="left:388px;top:472.8px" width="10" height="18" viewBox="0 0 10 18" ><path d="M0.7 1.6H9.5V10.6L5.1 16.7L0.7 10.6Z" fill="#0b6dd0"/></svg>
<div class="spin" style="left:526.50px;top:406.20px;width:59.40px;height:19.20px;"><div style="left:46.60px;top:1.00px;width:11.20px;height:7.60px;background:#f4f4f4;border:1px solid #dedede"></div><div style="left:46.60px;top:9.00px;width:11.20px;height:7.80px;background:#f4f4f4;border:1px solid #dedede"></div><svg style="left:46.6px;top:0px" width="12" height="18" viewBox="0 0 12 18"><path d="M3.6 6.2H7.8L5.7 3.5Z" fill="#111"/><path d="M3.6 11.6H7.8L5.7 14.3Z" fill="#111"/></svg></div>
<span class="t v" style="left:528.21px;top:407.40px;font-size:10px;transform:scaleX(1.0514);">255</span>
<div class="spin" style="left:526.50px;top:439.80px;width:59.40px;height:19.20px;"><div style="left:46.60px;top:1.00px;width:11.20px;height:7.60px;background:#f4f4f4;border:1px solid #dedede"></div><div style="left:46.60px;top:9.00px;width:11.20px;height:7.80px;background:#f4f4f4;border:1px solid #dedede"></div><svg style="left:46.6px;top:0px" width="12" height="18" viewBox="0 0 12 18"><path d="M3.6 6.2H7.8L5.7 3.5Z" fill="#111"/><path d="M3.6 11.6H7.8L5.7 14.3Z" fill="#111"/></svg></div>
<span class="t v" style="left:528.22px;top:441.00px;font-size:10px;transform:scaleX(1.0366);">209</span>
<div class="spin" style="left:526.50px;top:472.80px;width:59.40px;height:19.20px;"><div style="left:46.60px;top:1.00px;width:11.20px;height:7.60px;background:#f4f4f4;border:1px solid #dedede"></div><div style="left:46.60px;top:9.00px;width:11.20px;height:7.80px;background:#f4f4f4;border:1px solid #dedede"></div><svg style="left:46.6px;top:0px" width="12" height="18" viewBox="0 0 12 18"><path d="M3.6 6.2H7.8L5.7 3.5Z" fill="#111"/><path d="M3.6 11.6H7.8L5.7 14.3Z" fill="#111"/></svg></div>
<span class="t v" style="left:527.93px;top:474.00px;font-size:10px;transform:scaleX(1.0667);">153</span>
<div class="btn" style="left:613.60px;top:476.00px;width:72.30px;height:22.60px;"></div>
<span class="t j" style="left:633.25px;top:479.40px;font-size:10.5px;transform:scaleX(0.7765);">リセット</span>
<div style="left:637.20px;top:513.20px;width:72.60px;height:23.40px;background:#fdfdfd;border:1.4px solid #3b83c6;border-radius:4px"></div>
<div class="btn" style="left:716.60px;top:513.40px;width:72.00px;height:23.00px;"></div>
<span class="t j" style="left:662.23px;top:516.60px;font-size:10.5px;transform:scaleX(1.0617);">保存</span>
<span class="t j" style="left:738.64px;top:516.60px;font-size:10.5px;transform:scaleX(0.8650);">閉じる</span>
<svg style="left:789.5px;top:538.5px" width="8" height="8" viewBox="0 0 8 8" ><rect x="6" y="0" width="1.3" height="1.3" fill="#b9b9b9"/><rect x="3" y="3" width="1.3" height="1.3" fill="#b9b9b9"/><rect x="6" y="3" width="1.3" height="1.3" fill="#b9b9b9"/><rect x="0" y="6" width="1.3" height="1.3" fill="#b9b9b9"/><rect x="3" y="6" width="1.3" height="1.3" fill="#b9b9b9"/><rect x="6" y="6" width="1.3" height="1.3" fill="#b9b9b9"/></svg>

</body></html>
